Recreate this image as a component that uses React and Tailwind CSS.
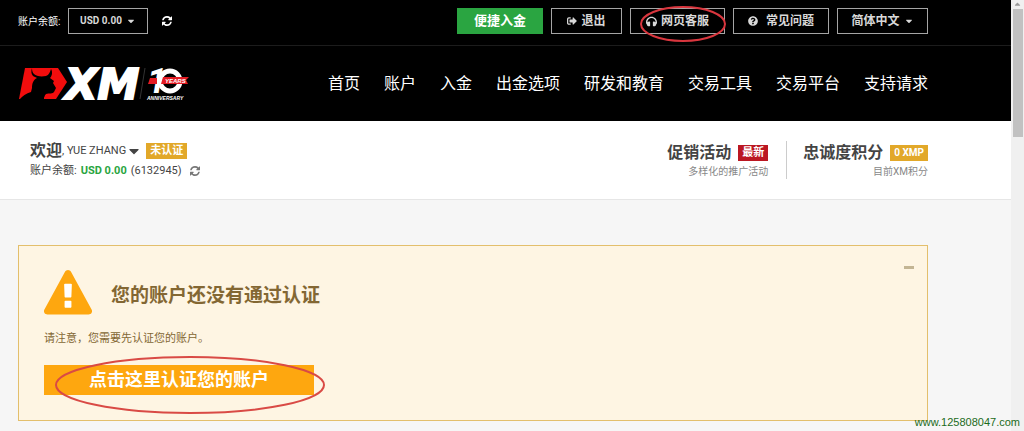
import { FaSignOutAlt, FaHeadphones, FaQuestionCircle, FaCaretDown } from "react-icons/fa";

const menu = ['首页', '账户', '入金', '出金选项', '研发和教育', '交易工具', '交易平台', '支持请求']

function Refresh({ className }) {
    return (
        <svg viewBox="0 0 1536 1536" className={className} fill="currentColor" aria-hidden="true">
            <path d="M1511 928q0 5-1 7-64 268-268 434.500T764 1536q-146 0-282.500-55T238 1324l-129 129q-19 19-45 19t-45-19-19-45V960q0-26 19-45t45-19h448q26 0 45 19t19 45-19 45l-137 137q71 66 161 102t187 36q134 0 250-65t186-179q11-17 53-117 8-23 30-23h192q13 0 22.500 9.500t9.500 22.500zm25-800v448q0 26-19 45t-45 19h-448q-26 0-45-19t-19-45 19-45l138-138Q969 256 768 256q-134 0-250 65T332 500q-11 17-53 117-8 23-30 23H50q-13 0-22.500-9.500T18 608v-7q65-268 270-434.500T768 0q146 0 284 55.500T1297 212l130-129q19-19 45-19t45 19 19 45z" />
        </svg>
    )
}

function Warning({ className }) {
    return (
        <svg viewBox="0 0 1792 1792" className={className} aria-hidden="true">
            <path d="M740 480H1052V1440H740Z" fill="#fff" />
            <path fill="currentColor" d="M1024 1375v-190q0-14-9.500-23.500t-22.500-9.500h-192q-13 0-22.500 9.500t-9.500 23.500v190q0 14 9.500 23.500t22.500 9.500h192q13 0 22.500-9.500t9.500-23.500zm-2-374l18-459q0-12-10-19-13-11-24-11h-220q-11 0-24 11-10 7-10 21l17 457q0 10 10 16.500t24 6.500h185q14 0 23.500-6.500t10.500-16.500zm-14-934l768 1408q35 63-2 126-17 29-46.500 46t-63.500 17h-1536q-34 0-63.500-17t-46.500-46q-37-63-2-126l768-1408q17-31 47-49t65-18 65 18 47 49z" />
        </svg>
    )
}

function Logo() {
    return (
        <svg viewBox="0 0 172 36" className="h-9 w-[172px] overflow-visible" role="img" aria-label="XM 10 Years Anniversary">
            <path d="M7 2H40L49 16L38 33H1Z" fill="#f20d0d" />
            <path d="M14 2C13 5 13 8 15 10C16 11 18 11 19 12C15 14 14 18 14 22L13 26Q6 28 1 34H27C26 32 26 30 28 28C31 27 35 28 36 26L38 22L35 17L36 15L32 12C34 10 35 6 33 3C32 6 31 9 28 10C25 10.500 22 10.500 20 10C16 9 14 7 14 2Z" fill="#000" />
            <path d="M26 31Q31 32 33 28L38 28V33H26Z" fill="#f20d0d" />
            <text x="47" y="33" fontSize="42" stroke="#fff" strokeWidth="2" className="fill-white font-['DejaVu_Sans'] font-bold italic">XM</text>
            <path d="M127 2L122 33" stroke="#333" strokeWidth="1" />
            <text x="129" y="27" fontSize="35" className="fill-white font-[Roboto] font-bold italic">1</text>
            <circle cx="152" cy="15" r="10" fill="none" stroke="#fff" strokeWidth="5" />
            <path d="M132 12H139V18H130ZM145 11H171L168 14L170 18H143Z" fill="#e31b23" />
            <text x="147" y="17" fontSize="6" className="fill-white font-['Liberation_Sans',Arial,sans-serif] font-bold italic">YEARS</text>
            <text x="129" y="34" fontSize="5" className="fill-white font-['Liberation_Sans',Arial,sans-serif] font-bold italic">ANNIVERSARY</text>
        </svg>
    )
}

function TopButton({ className, children }) {
    return (
        <button className={`relative flex h-[26px] items-center justify-center gap-1 border border-[#a5a5a5] text-xs font-bold text-[#d8d8d8] ${className}`}>
            {children}
        </button>
    )
}

function App() {
    return (
        <div className="relative flex min-h-screen bg-[#f6f6f6] font-[Roboto,'Noto_Sans_CJK_SC',sans-serif] text-[#444]">
            <div className="min-w-0 flex-1">
                <header className="bg-black text-white">
                    {/* barra superior */}
                    <div className="border-b border-[#1c1c1c] pl-[18px] pt-2 pb-[11px]">
                        <div className="flex max-w-[910px] items-center">
                            <span className="w-[50px] text-[10px]">账户余额:</span>
                            <TopButton className="w-20">
                                <span className="text-[10px]">USD 0.00</span>
                                <FaCaretDown className="size-[10px]" />
                            </TopButton>
                            <button aria-label="刷新" className="ml-[14px]"><Refresh className="size-[10px]" /></button>
                            <div className="ml-auto flex gap-2">
                                <button className="h-[26px] w-[86px] bg-[#2aa541] text-[13px] font-bold">便捷入金</button>
                                <TopButton className="w-[71px]"><FaSignOutAlt className="size-[10px]" />退出</TopButton>
                                <TopButton className="w-[95px]">
                                    <FaHeadphones className="size-[11px]" />网页客服
                                    <svg viewBox="0 0 88 38" className="pointer-events-none absolute -top-1 left-[9px] h-[38px] w-[88px]" fill="none" aria-hidden="true">
                                        <ellipse cx="43" cy="19" rx="42" ry="17" stroke="#d9363e" strokeWidth="2" />
                                    </svg>
                                </TopButton>
                                <TopButton className="w-24"><FaQuestionCircle className="mr-1 size-[10px]" />常见问题</TopButton>
                                <TopButton className="w-[91px]">简体中文<FaCaretDown className="size-[10px]" /></TopButton>
                            </div>
                        </div>
                    </div>
                    {/* menu principal */}
                    <div className="pl-[18px] pt-5 pb-[19px]">
                        <div className="flex max-w-[910px] items-center justify-between">
                            <a href="#"><Logo /></a>
                            <nav className="flex gap-6 text-base leading-6">
                                {menu.map(item => <a key={item} href="#">{item}</a>)}
                            </nav>
                        </div>
                    </div>
                </header>

                {/* datos de la cuenta */}
                <section className="border-b border-[#e6e6e6] bg-white pt-5 pb-[18px] pl-[30px]">
                    <div className="flex max-w-[898px] items-start justify-between">
                        <div>
                            <div className="flex h-5 items-center">
                                <h2 className="text-base font-bold leading-5">欢迎</h2>
                                <span className="text-[11px] leading-5">, YUE ZHANG</span>
                                <button aria-label="账户菜单"><FaCaretDown className="size-4" /></button>
                                <span className="ml-1 bg-[#e2a829] px-1 text-[11px] font-bold leading-4 text-white">未认证</span>
                            </div>
                            <div className="flex h-5 items-center gap-1 text-[11px]">
                                <span>账户余额:</span>
                                <b className="text-[#2aa541]">USD 0.00</b>
                                <span>(6132945)</span>
                                <button aria-label="刷新" className="ml-1 text-[#777]"><Refresh className="size-[10px]" /></button>
                            </div>
                        </div>
                        <div className="flex text-right">
                            <div className="border-r border-[#ccc] pr-[18px]">
                                <div className="flex h-6 items-center gap-[7px]">
                                    <h3 className="text-base font-bold leading-5">促销活动</h3>
                                    <span className="bg-[#bb1722] px-1 text-[11px] font-bold leading-4 text-white">最新</span>
                                </div>
                                <p className="text-[10px] leading-[14px] text-[#888]">多样化的推广活动</p>
                            </div>
                            <div className="pl-4">
                                <div className="flex h-6 items-center gap-[7px]">
                                    <h3 className="text-base font-bold leading-5">忠诚度积分</h3>
                                    <span className="bg-[#e2a829] px-1 text-[10px] font-bold leading-4 text-white">0 XMP</span>
                                </div>
                                <p className="text-[10px] leading-[14px] text-[#888]">目前XM积分</p>
                            </div>
                        </div>
                    </div>
                </section>

                <main className="pt-[45px] pb-[10px] pl-[18px]">
                    <div className="max-w-[910px] border border-[#e3bf6c] bg-[#fef5e3] px-[25px] pt-5 pb-[25px] text-[#836733]">
                        <div className="flex items-start">
                            <div className="flex flex-1 gap-[19px] pt-1">
                                <Warning className="size-12 text-[#fea70f]" />
                                <h1 className="pt-[14px] text-[19px] font-bold leading-6">您的账户还没有通过认证</h1>
                            </div>
                            <button aria-label="收起" className="-mr-3 h-[3px] w-[10px] bg-[#c3b594]"></button>
                        </div>
                        <p className="mt-[13px] text-[11px] leading-4">请注意，您需要先认证您的账户。</p>
                        <button className="relative mt-[18px] h-[30px] w-[270px] bg-[#fea70f] text-lg leading-[30px] font-bold text-white">
                            点击这里认证您的账户
                            <svg viewBox="0 0 272 58" className="pointer-events-none absolute -top-[9px] left-[10px] h-[58px] w-[272px] max-w-none" fill="none" aria-hidden="true">
                                <ellipse cx="136" cy="29" rx="134" ry="28" stroke="#d94a45" strokeWidth="2" />
                            </svg>
                        </button>
                    </div>
                </main>
            </div>

            {/* barra de desplazamiento */}
            <div className="flex w-[13px] flex-col items-center bg-[#f0f0f0]" aria-hidden="true">
                <FaCaretDown className="size-[9px] rotate-180 text-[#999]" />
                <div className="h-32 w-[10px] bg-[#c1c1c1]"></div>
            </div>

            <span className="absolute right-1 bottom-0 font-['Liberation_Sans',Arial,sans-serif] text-[11px] leading-[17px] text-[#1b6b1b]">www.125808047.com</span>
        </div>
    )
}

export default App
